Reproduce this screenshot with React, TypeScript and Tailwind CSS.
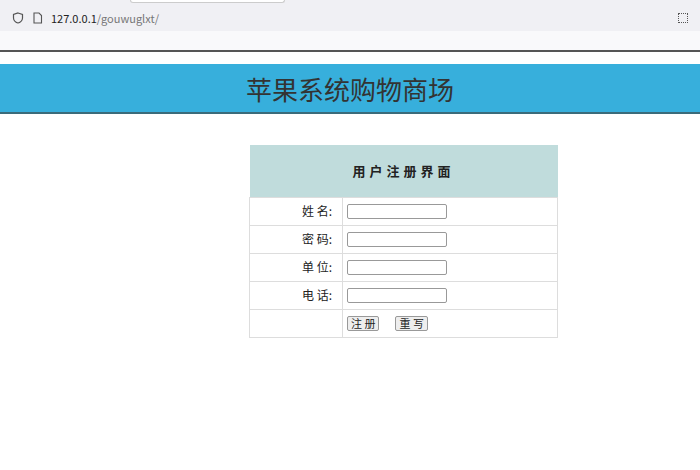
export default function App() {
  const rows = ["姓 名:", "密 码:", "单 位:", "电 话:"];
  return (
    <div className="w-[700px] h-[470px] bg-white overflow-hidden" style={{ fontFamily: '"Noto Sans CJK SC", "Liberation Sans", sans-serif' }}>
      <div className="h-[5px] bg-[#f0f0f4] relative">
        <div className="absolute left-[130px] w-[155px] h-[3px] bg-white border border-t-0 border-[#ccc] rounded-b" />
      </div>
      <div className="h-[26px] bg-[#f0f0f4] flex items-center px-3 gap-2 text-[11px]">
        <svg width="12" height="12" viewBox="0 0 12 12" fill="none" stroke="#555" strokeWidth="1.2"><path d="M6 1 L10.5 2.5 V6 C10.5 8.5 8 10.5 6 11 C4 10.5 1.5 8.5 1.5 6 V2.5 Z" /></svg>
        <svg width="11" height="12" viewBox="0 0 11 12" fill="none" stroke="#555" strokeWidth="1.1"><path d="M2 1 H7 L9.5 3.5 V11 H2 Z" /></svg>
        <span className="text-[#222]">127.0.0.1<span className="text-[#777]">/gouwuglxt/</span></span>
        <div className="ml-auto w-[10px] h-[10px] border border-dotted border-[#555]" />
      </div>
      <div className="h-[19px] bg-[#f9f9fb]" />
      <div className="h-[2px] bg-[#555]" />
      <div className="h-[12px]" />
      <div className="h-[50px] bg-[#37afdc] border-b-2 border-[#3b6b7a] flex items-center justify-center text-[26px] text-[#333]">
        苹果系统购物商场
      </div>
      <table className="ml-[249px] mt-[31px] w-[309px] border-collapse text-[12px] text-[#222]">
        <tbody>
          <tr>
            <td colSpan={2} className="h-[52px] bg-[#c0dcdc] text-center font-bold tracking-[4px] text-[13px]">用户注册界面</td>
          </tr>
          {rows.map((r) => (
            <tr key={r} className="h-[28px]">
              <td className="w-[93px] border border-[#ddd] text-right pr-[10px]">{r}</td>
              <td className="border border-[#ddd] pl-[4px]">
                <input className="w-[100px] h-[15px] border border-[#999] rounded-[2px] block" />
              </td>
            </tr>
          ))}
          <tr className="h-[28px]">
            <td className="border border-[#ddd]" />
            <td className="border border-[#ddd] pl-[4px]">
              <button className="text-[11px] px-[3px] h-[15px] leading-[13px] border border-[#999] bg-[#eee] rounded-[2px]">注 册</button>
              <button className="ml-[16px] text-[11px] px-[3px] h-[15px] leading-[13px] border border-[#999] bg-[#eee] rounded-[2px]">重 写</button>
            </td>
          </tr>
        </tbody>
      </table>
    </div>
  );
}
